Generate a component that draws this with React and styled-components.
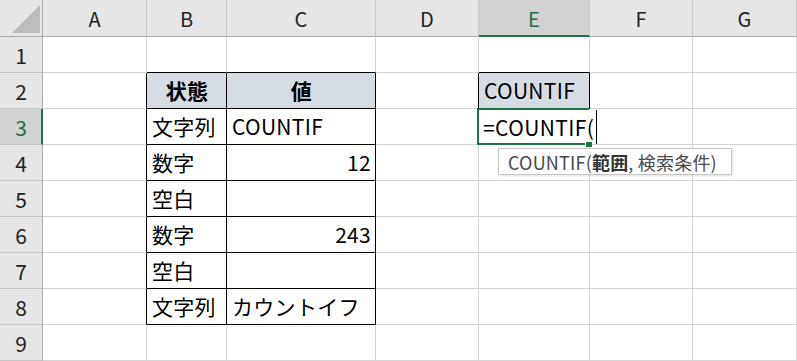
import React from 'react'
import styled, { createGlobalStyle } from 'styled-components'

const GREEN = '#217346'
const GRID = '#d4d4d4'
const INK = '#000'

const GlobalStyle = createGlobalStyle`
  html, body {
    margin: 0;
    padding: 0;
    background: #fff;
    font-family: "Noto Sans CJK JP", "Noto Sans", sans-serif;
  }
`

const columns = ['A', 'B', 'C', 'D', 'E', 'F', 'G']
const widths = [104, 80, 149, 103, 111, 103, 104]
const rowCount = 9

// cell contents keyed by address
const cells = {
  B2: { text: '状態', fill: true, bold: true, align: 'center' },
  C2: { text: '値', fill: true, bold: true, align: 'center' },
  B3: { text: '文字列' },
  C3: { text: 'COUNTIF' },
  B4: { text: '数字' },
  C4: { text: '12', align: 'right' },
  B5: { text: '空白' },
  C5: { text: '' },
  B6: { text: '数字' },
  C6: { text: '243', align: 'right' },
  B7: { text: '空白' },
  C7: { text: '' },
  B8: { text: '文字列' },
  C8: { text: 'カウントイフ' },
  E2: { text: 'COUNTIF', fill: true },
}

const inTable = (c, r) => (c === 'B' || c === 'C') && r >= 2 && r <= 8

const rightEdge = (c, r) => {
  if (c === 'E' && r === 3) return '#fff'
  if (inTable(c, r) || (c === 'A' && r >= 2 && r <= 8)) return INK
  if ((c === 'D' || c === 'E') && r === 2) return INK
  return GRID
}

const bottomEdge = (c, r) => {
  if (inTable(c, r) || ((c === 'B' || c === 'C') && r === 1)) return INK
  if (c === 'E' && (r === 1 || r === 2)) return INK
  return GRID
}

const Sheet = styled.div`
  display: grid;
  grid-template-columns: 43px ${widths.map((w) => `${w}px`).join(' ')};
  grid-template-rows: 37px repeat(${rowCount}, 36px);
  width: 797px;
  overflow: hidden;
`

const Corner = styled.div`
  position: relative;
  background: #e6e6e6;
  border-right: 1px solid #ababab;
  border-bottom: 1px solid #ababab;
  box-sizing: border-box;

  &::after {
    content: '';
    position: absolute;
    left: 12px;
    top: 5px;
    width: 28px;
    height: 28px;
    background: #bdbdbd;
    clip-path: polygon(100% 0, 100% 100%, 0 100%);
  }
`

const ColHeader = styled.div`
  display: flex;
  align-items: center;
  justify-content: center;
  box-sizing: border-box;
  background: ${(p) => (p.$active ? '#d2d2d2' : '#e6e6e6')};
  color: ${(p) => (p.$active ? GREEN : '#222')};
  border-right: 1px solid #c6c6c6;
  border-bottom: ${(p) => (p.$active ? `2px solid ${GREEN}` : '1px solid #ababab')};
  font-size: 20px;
  padding-top: ${(p) => (p.$active ? '1px' : '0')};
`

const RowHeader = styled.div`
  display: flex;
  align-items: center;
  justify-content: center;
  box-sizing: border-box;
  background: ${(p) => (p.$active ? '#d2d2d2' : '#e6e6e6')};
  color: ${(p) => (p.$active ? GREEN : '#222')};
  border-right: ${(p) => (p.$active ? `2px solid ${GREEN}` : '1px solid #ababab')};
  border-bottom: 1px solid #c6c6c6;
  font-size: 21px;
  padding-left: ${(p) => (p.$active ? '1px' : '0')};
`

const Cell = styled.div`
  position: relative;
  display: flex;
  align-items: center;
  justify-content: ${(p) =>
    p.$align === 'center' ? 'center' : p.$align === 'right' ? 'flex-end' : 'flex-start'};
  box-sizing: border-box;
  padding: 0 4px 1px 5px;
  background: ${(p) => (p.$fill ? '#d6dce4' : '#fff')};
  border-right: 1px solid ${(p) => p.$right};
  border-bottom: 1px solid ${(p) => p.$bottom};
  font-size: 21px;
  letter-spacing: 0.3px;
  font-weight: ${(p) => (p.$bold ? 700 : 400)};
  color: #000;
  white-space: nowrap;
`

const Selection = styled.div`
  position: absolute;
  left: -2px;
  top: -1px;
  width: 112px;
  height: 37px;
  box-sizing: border-box;
  border: 2px solid ${GREEN};
  border-right: none;
  z-index: 2;
`

const FillHandle = styled.div`
  position: absolute;
  right: -3px;
  bottom: -4px;
  width: 6px;
  height: 5px;
  background: ${GREEN};
  border-left: 1px solid #fff;
  z-index: 3;
`

const Editor = styled.div`
  position: absolute;
  left: 4px;
  top: 0;
  height: 35px;
  display: flex;
  align-items: center;
  gap: 2px;
  padding-right: 3px;
  background: #fff;
  font-size: 21px;
  letter-spacing: 0.4px;
  z-index: 1;
`

const Caret = styled.span`
  display: block;
  width: 1px;
  height: 34px;
  background: #000;
`

const Tip = styled.div`
  position: absolute;
  left: 19px;
  top: 39px;
  width: 234px;
  height: 27px;
  box-sizing: border-box;
  display: flex;
  align-items: center;
  padding-left: 9px;
  background: #fff;
  border: 1px solid #c6c6c6;
  box-shadow: 1px 1px 2px rgba(0, 0, 0, 0.12);
  color: #4a4a4a;
  font-size: 18px;
  letter-spacing: 0.2px;
  white-space: nowrap;
  z-index: 4;

  b {
    font-weight: 700;
    color: #333;
  }
`

const EditingCell = () => (
  <>
    <Selection>
      <FillHandle />
    </Selection>
    <Editor>
      <span>=COUNTIF(</span>
      <Caret />
    </Editor>
    <Tip>
      COUNTIF(<b>範囲</b>, 検索条件)
    </Tip>
  </>
)

export default function App() {
  const rows = Array.from({ length: rowCount }, (_, i) => i + 1)

  return (
    <>
      <GlobalStyle />
      <Sheet>
        <Corner />
        {columns.map((c) => (
          <ColHeader key={c} $active={c === 'E'}>
            {c}
          </ColHeader>
        ))}
        {rows.map((r) => (
          <React.Fragment key={r}>
            <RowHeader $active={r === 3}>{r}</RowHeader>
            {columns.map((c) => {
              const data = cells[`${c}${r}`] || {}
              const editing = c === 'E' && r === 3
              return (
                <Cell
                  key={c}
                  $right={rightEdge(c, r)}
                  $bottom={bottomEdge(c, r)}
                  $fill={data.fill}
                  $bold={data.bold}
                  $align={data.align}
                  style={editing ? { zIndex: 5, overflow: 'visible' } : undefined}
                >
                  {editing ? <EditingCell /> : data.text}
                </Cell>
              )
            })}
          </React.Fragment>
        ))}
      </Sheet>
    </>
  )
}
